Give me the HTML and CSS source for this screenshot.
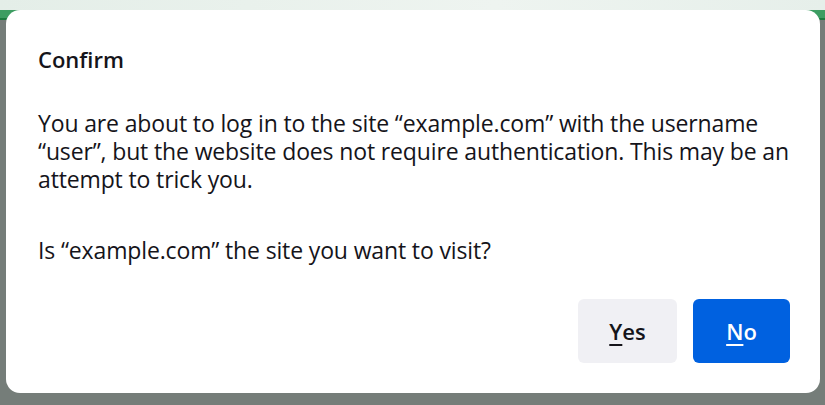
FILE: index.html
```html
<!DOCTYPE html>
<html lang="en">
<head>
<meta charset="utf-8">
<title>Confirm</title>
<link rel="stylesheet" href="styles.css">
</head>
<body>
<div class="chrome"></div>
<div class="band"></div>
<div class="dialog" role="dialog" aria-labelledby="dlg-title">
  <h1 class="title" id="dlg-title">Confirm</h1>
  <div class="message">
    <p>You are about to log in to the site “example.com” with the username “user”, but the website does not require authentication. This may be an attempt to trick you.</p>
    <p>Is “example.com” the site you want to visit?</p>
  </div>
  <div class="actions">
    <button class="btn btn-secondary"><u>Y</u>es</button>
    <button class="btn btn-primary"><u>N</u>o</button>
  </div>
</div>
</body>
</html>
```
FILE: styles.css
```css
html, body {
  margin: 0;
  padding: 0;
}
body {
  width: 825px;
  height: 405px;
  overflow: hidden;
  background: #757d79;
  font-family: "Open Sans", "Noto Sans", sans-serif;
  color: #15141a;
  position: relative;
}
.chrome {
  height: 10px;
  background: linear-gradient(to right, #e4eee8, #eef4f0 60%, #e6efea);
}
.band {
  height: 8px;
  background: #3d9d62;
  border-bottom: 2px solid #1d7a3f;
}
.dialog {
  position: absolute;
  top: 10px;
  left: 6px;
  width: 814px;
  height: 383px;
  box-sizing: border-box;
  background: #ffffff;
  border-radius: 14px;
  padding: 35px 30px 30px 32px;
  display: flex;
  flex-direction: column;
}
.title {
  margin: 0;
  font-size: 22px;
  line-height: 28px;
  font-weight: 600;
}
.message {
  margin-top: 36px;
  font-size: 23px;
  line-height: 28px;
  letter-spacing: -0.14px;
}
.message p {
  margin: 0;
}
.message p + p {
  margin-top: 43px;
}
.actions {
  margin-top: auto;
  display: flex;
  justify-content: flex-end;
  gap: 16px;
}
.btn {
  height: 64px;
  border: none;
  border-radius: 6px;
  font-family: inherit;
  font-size: 22px;
  font-weight: 600;
  padding: 0;
  cursor: pointer;
}
.btn u {
  text-underline-offset: 4px;
  text-decoration-thickness: 2px;
}
.btn-secondary {
  width: 99px;
  background: #f0f0f4;
  color: #15141a;
}
.btn-primary {
  width: 97px;
  background: #0061e0;
  color: #ffffff;
}
```
